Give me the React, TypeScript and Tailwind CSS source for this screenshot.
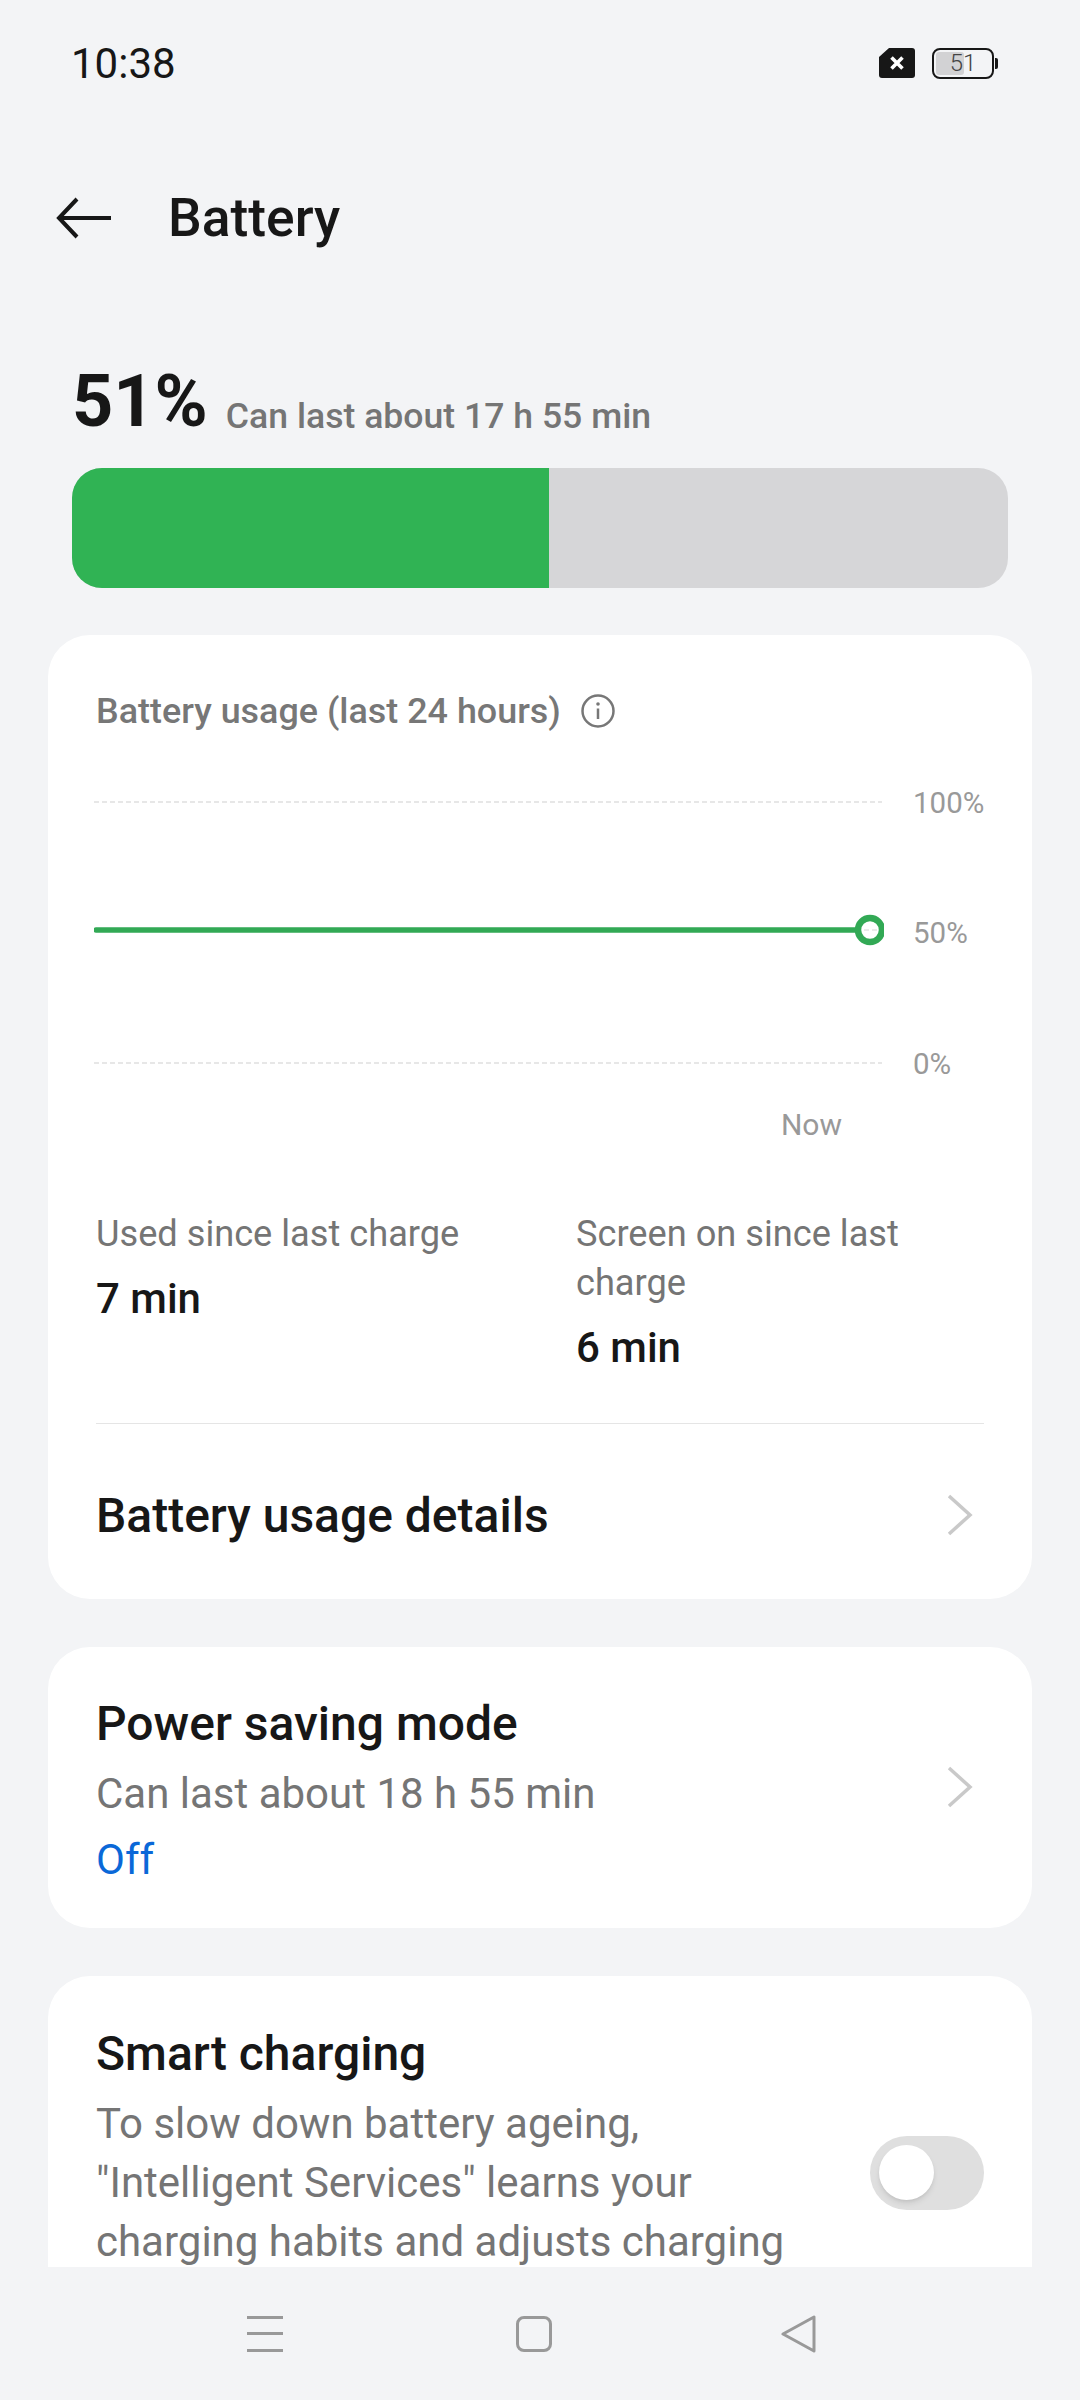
import React from 'react';

const Chevron: React.FC = () => (
  <svg width="28" height="44" viewBox="0 0 28 44" fill="none" className="-mt-[2px] shrink-0">
    <path d="M3 3 L24 22 L3 41" stroke="#c9c9c9" strokeWidth="3.5" />
  </svg>
);

const App: React.FC = () => {
  return (
    <div className="flex h-[2400px] w-[1080px] flex-col overflow-hidden bg-[#f3f4f6] font-['Roboto',sans-serif] text-[#171717]">
      {/* Status bar */}
      <div className="flex h-[126px] shrink-0 items-center justify-between pl-[71px] pr-[82px]">
        <span className="pt-[2px] text-[42px] leading-none">10:38</span>
        <div className="flex items-center gap-[17px]">
          <svg width="36" height="30" viewBox="0 0 36 30">
            <path d="M10 0 H33 a3 3 0 0 1 3 3 V27 a3 3 0 0 1 -3 3 H3 a3 3 0 0 1 -3 -3 V9 Z" fill="#171717" />
            <path d="M12.5 9.5 L23.5 20.5 M23.5 9.5 L12.5 20.5" stroke="#fff" strokeWidth="3.6" />
          </svg>
          <div className="flex items-center gap-[1px]">
            <div className="relative flex h-[31px] w-[62px] items-center justify-center overflow-hidden rounded-[8px] border-[2.5px] border-[#171717]">
              <div className="absolute bottom-[2px] left-[2px] top-[2px] w-[28px] rounded-[3px] bg-[#d2d2d4]" />
              <span className="relative text-[24px] font-light leading-none text-[#444]">51</span>
            </div>
            <div className="h-[11px] w-[3px] rounded-r-[2px] bg-[#171717]" />
          </div>
        </div>
      </div>

      {/* Header */}
      <div className="mt-[46px] flex h-[92px] shrink-0 items-center pl-[56px]">
        <svg width="56" height="44" viewBox="0 0 56 44" fill="none">
          <path d="M55 22 H3 M21 3 L3 22 L21 41" stroke="#171717" strokeWidth="4" />
        </svg>
        <h1 className="ml-[56px] text-[53.4px] font-medium leading-none">Battery</h1>
      </div>

      <div className="relative flex-1 overflow-hidden">
        {/* Battery level */}
        <div className="mt-[94px] flex items-baseline px-[72px]">
          <span className="text-[72px] font-bold leading-[88px]">51%</span>
          <span className="ml-[18px] translate-y-[2px] text-[35.6px] font-medium text-[#757575]">Can last about 17 h 55 min</span>
        </div>
        <div className="mx-[72px] mt-[22px] flex h-[120px] overflow-hidden rounded-[30px] bg-[#d6d6d8]">
          <div className="w-[477px] bg-[#30b354]" />
        </div>

        <div className="mt-[47px] flex flex-col gap-[48px] px-[48px]">
          {/* Usage card */}
          <div className="rounded-[42px] bg-white px-[48px] pt-[53px]">
            <div className="flex items-center gap-[20px]">
              <span className="text-[35.9px] font-medium leading-[46px] text-[#777]">Battery usage (last 24 hours)</span>
              <svg width="34" height="34" viewBox="0 0 34 34" fill="none">
                <circle cx="17" cy="17" r="15.5" stroke="#777" strokeWidth="2.5" />
                <path d="M17 14.5 V25" stroke="#777" strokeWidth="2.5" />
                <circle cx="17" cy="10" r="1.8" fill="#777" />
              </svg>
            </div>

            <div className="mt-[44px] flex items-start">
              <svg width="790" height="300" viewBox="0 0 790 300" fill="none" className="-ml-[2px] shrink-0">
                <path d="M0 24 H788" stroke="#dfdfdf" strokeWidth="1.5" strokeDasharray="5 3" />
                <path d="M0 285 H788" stroke="#dfdfdf" strokeWidth="1.5" strokeDasharray="5 3" />
                <path d="M2 152 H765" stroke="#32a955" strokeWidth="5.5" strokeLinecap="round" />
                <circle cx="776" cy="152" r="12" fill="#fff" stroke="#32a955" strokeWidth="6.5" />
                <path d="M770 152 H783" stroke="#e4e4e4" strokeWidth="1.5" strokeDasharray="5 3" />
              </svg>
              <div className="ml-[29px] mt-[2px] flex h-[307px] flex-col justify-between text-[29.5px] leading-[46px] text-[#999]">
                <span>100%</span>
                <span className="-mt-[1px]">50%</span>
                <span>0%</span>
              </div>
            </div>

            <div className="mr-[142px] mt-[18px] text-right text-[30px] leading-[40px] text-[#999]">Now</div>

            <div className="mt-[64px] grid grid-cols-[480px_1fr]">
              <div>
                <div className="text-[36.2px] leading-[49px] text-[#757575]">Used since last charge</div>
                <div className="mt-[16px] text-[42px] font-medium leading-[49px]">7 min</div>
              </div>
              <div>
                <div className="text-[36.2px] leading-[49px] text-[#757575]">Screen on since last charge</div>
                <div className="mt-[16px] text-[42px] font-medium leading-[49px]">6 min</div>
              </div>
            </div>

            <div className="mt-[51px] flex h-[176px] items-center justify-between border-t border-[#e5e5e5] pr-[10px] pt-[8px]">
              <span className="text-[48px] font-medium">Battery usage details</span>
              <Chevron />
            </div>
          </div>

          {/* Power saving */}
          <div className="flex h-[281px] items-center justify-between rounded-[42px] bg-white pl-[48px] pr-[58px]">
            <div className="pt-[11px]">
              <div className="text-[48px] font-medium leading-[60px]">Power saving mode</div>
              <div className="mt-[7px] text-[42px] leading-[66px] text-[#757575]">Can last about 18 h 55 min</div>
              <div className="text-[42px] leading-[65px] text-[#0a68d8]">Off</div>
            </div>
            <Chevron />
          </div>

          {/* Smart charging */}
          <div className="flex h-[392px] items-center justify-between rounded-t-[42px] bg-white pl-[48px] pr-[48px] pt-[48px]">
            <div className="w-[740px] self-start">
              <div className="text-[48px] font-medium leading-[60px]">Smart charging</div>
              <div className="mt-[10px] text-[42px] leading-[59px] text-[#757575]">
                To slow down battery ageing, "Intelligent Services" learns your charging habits and adjusts charging
              </div>
            </div>
            <div className="-mt-[47px] flex h-[74px] w-[114px] items-center rounded-full bg-[#dfdfdf] pl-[9px]">
              <div className="h-[55px] w-[55px] rounded-full bg-white shadow-md" />
            </div>
          </div>
        </div>
      </div>

      {/* Navigation bar */}
      <div className="flex h-[133px] shrink-0 items-center bg-[#f3f4f6]">
        <div className="ml-[247px] flex w-[36px] flex-col gap-[13.5px]">
          <div className="h-[3px] bg-[#999]" />
          <div className="h-[3px] bg-[#999]" />
          <div className="h-[3px] bg-[#999]" />
        </div>
        <div className="ml-[233px] h-[36px] w-[36px] rounded-[8px] border-[3px] border-[#999]" />
        <svg width="36" height="38" viewBox="0 0 36 38" fill="none" className="ml-[229px]">
          <path d="M2 19 L33 2 V36 Z" stroke="#999" strokeWidth="3" strokeLinejoin="round" />
        </svg>
      </div>
    </div>
  );
};

export default App;
